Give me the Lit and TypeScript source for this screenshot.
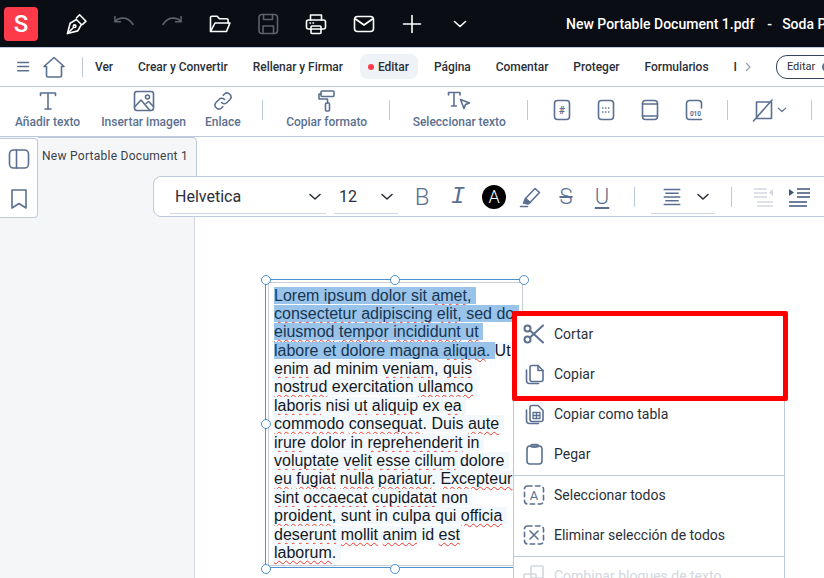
import { LitElement, html, css, svg } from 'lit';
import { customElement } from 'lit/decorators.js';

const icon = (body: unknown, size = 24) => html`<svg class="ico" width=${size} height=${size} viewBox="0 0 24 24" fill="none" stroke="currentColor" stroke-width="1.6" stroke-linecap="round" stroke-linejoin="round">${body}</svg>`;

const chevron = (size = 16) => html`<svg class="ico" width=${size} height=${size} viewBox="0 0 16 16" fill="none" stroke="currentColor" stroke-width="1.6" stroke-linecap="round" stroke-linejoin="round"><path d="M3 5.500l5 4.500 5-4.500"/></svg>`;

const TOP_ICONS = [
  { off: false, d: svg`<path d="M3.500 21.500l2.600-10.200 6.300-3.800 5 5-3.600 6.400z"/><path d="M3.500 21.500l6-6"/><circle cx="10.600" cy="14.200" r="1.300"/><path d="M12.400 6l3.200-3.200 6.400 6.400-3.400 3.200"/>` },
  { off: true, d: svg`<path d="M3 9.500c4-4.500 13-5.500 18 3"/><path d="M3 4.500v5.200h5.400"/>` },
  { off: true, d: svg`<path d="M21 9.500c-4-4.500-13-5.500-18 3"/><path d="M21 4.500v5.200h-5.400"/>` },
  { off: false, d: svg`<path d="M2.500 19V5.500a1.300 1.300 0 0 1 1.300-1.300h5.400l2.200 2.600h7.400a1.300 1.300 0 0 1 1.300 1.300V11"/><path d="M2.500 19.500h16l3.400-8.500H7z"/>` },
  { off: true, d: svg`<rect x="3" y="2.500" width="18.500" height="19" rx="3"/><path d="M7.500 2.500v5h9v-5"/><path d="M7 21.500v-7.500h10.500v7.500"/>` },
  { off: false, d: svg`<path d="M6.500 8V3h11v5"/><rect x="2.500" y="8" width="19" height="9" rx="2"/><rect x="7" y="14" width="10" height="7.500" rx="1"/><path d="M6 11h.5M9 11h.5"/>` },
  { off: false, d: svg`<rect x="2.500" y="4.500" width="19" height="15" rx="3"/><path d="M3.500 7l8.500 6 8.500-6"/>` },
];

const TOOLS_A = [
  { label: 'Añadir texto', d: svg`<path d="M4.500 6.500V4h15v2.500"/><path d="M12 4v16"/><path d="M9 20h6"/>` },
  { label: 'Insertar imagen', d: svg`<rect x="2.500" y="2.500" width="19" height="19" rx="2.500"/><circle cx="15.500" cy="8" r="2"/><path d="M2.500 18l6.500-7 9 10.500"/><path d="M14 14.500l2.500-2 5 5"/>` },
  { label: 'Enlace', d: svg`<path d="M10.500 13.500a3.800 3.800 0 0 0 5.500 0l3-3a3.900 3.900 0 0 0-5.500-5.500l-1.300 1.300"/><path d="M13.500 10.500a3.800 3.800 0 0 0-5.500 0l-3 3a3.900 3.900 0 0 0 5.500 5.500l1.300-1.300"/>` },
];

const FIELD_ICONS = [
  svg`<rect x="4.500" y="2.500" width="15" height="19" rx="3"/><text x="12" y="16" text-anchor="middle" font-family="Roboto" font-size="10" font-weight="700" fill="currentColor" stroke="none">#</text>`,
  svg`<rect x="4.500" y="2.500" width="15" height="19" rx="3"/><path stroke-width="1.300" stroke-dasharray="0.500 2.500" d="M8.500 10h7.500M8.500 14h7.500"/>`,
  svg`<rect x="4.500" y="2.500" width="15" height="19" rx="3"/><path d="M4.500 6h15M4.500 18h15"/>`,
  svg`<path d="M19.500 10V5.500a3 3 0 0 0-3-3h-9a3 3 0 0 0-3 3v13a3 3 0 0 0 3 3h12"/><text x="13.500" y="18" text-anchor="middle" font-family="Roboto" font-size="6.500" font-weight="700" fill="currentColor" stroke="none">010</text>`,
];

const MENU_TOP = [
  { label: 'Cortar', d: svg`<g stroke-width="2"><circle cx="5.500" cy="6.500" r="3"/><circle cx="5.500" cy="17.500" r="3"/><path d="M8 8.500L21 20.500M8 15.500L21 3.500"/></g>` },
  { label: 'Copiar', d: svg`<path d="M8 5.500a2 2 0 0 1 2-2h6l5 5v9a2 2 0 0 1-2 2h-9a2 2 0 0 1-2-2z"/><path d="M16 3.500v5h5"/><path d="M4.500 8v10.500a3 3 0 0 0 3 3h9"/>` },
  { label: 'Copiar como tabla', d: svg`<path d="M8 5.500a2 2 0 0 1 2-2h6l5 5v9a2 2 0 0 1-2 2h-9a2 2 0 0 1-2-2z"/><path d="M4.500 8v10.500a3 3 0 0 0 3 3h9"/><path stroke-width="1.300" d="M11 10.500h7v6h-7zM14.500 10.500v6M11 13.500h7"/>` },
  { label: 'Pegar', d: svg`<rect x="5" y="4" width="15" height="18" rx="3"/><path d="M8.500 4a2 2 0 0 1 2-1.500h4a2 2 0 0 1 2 1.500c0 1.500-8 1.500-8 0z"/>` },
];

const dashed = svg`<rect x="2.500" y="3" width="19" height="18" rx="3" stroke-dasharray="4.500 3.500"/>`;

const LINES = [
  'Lorem ipsum dolor sit *amet, ',
  '*consectetur *adipiscing *elit, sed do ',
  '*eiusmod *tempor *incididunt *ut ',
  'labore et dolore magna *aliqua. |Ut ',
  '*enim ad minim *veniam, *quis ',
  '*nostrud exercitation *ullamco ',
  '*laboris nisi *ut *aliquip ex *ea ',
  '*commodo *consequat. Duis *aute ',
  '*irure dolor in *reprehenderit in ',
  '*voluptate *velit *esse *cillum dolore ',
  '*eu *fugiat *nulla *pariatur. *Excepteur ',
  '*sint *occaecat *cupidatat non ',
  '*proident, sunt in culpa qui *officia ',
  '*deserunt *mollit *anim id *est ',
  '*laborum. ',
];

@customElement('app-root')
export class AppRoot extends LitElement {
  static styles = css`
    :host {
      display: block;
      width: 824px;
      height: 578px;
      overflow: hidden;
      position: relative;
      font-family: Roboto, sans-serif;
      color: #2b2f38;
      background: #fff;
    }
    .ico { display: block; flex: none; }
    .app { display: flex; flex-direction: column; height: 578px; }

    .titlebar {
      display: flex;
      align-items: center;
      height: 47px;
      flex: none;
      background: #0a0d13;
      color: #fff;
      white-space: pre;
    }
    .logo {
      width: 34px;
      height: 34px;
      margin: 0 26px 0 4px;
      border-radius: 4px;
      background: #fd3a4a;
      color: #fff;
      font-size: 24px;
      font-weight: 500;
      line-height: 34px;
      text-align: center;
      flex: none;
    }
    .top-icons { display: flex; align-items: center; gap: 24px; }
    .top-icons .off { color: #5d6168; }
    .title { margin-left: 94px; font-size: 14px; font-weight: 500; }
    .dash { margin: 0 10px 0 13px; }

    .menubar {
      display: flex;
      align-items: center;
      height: 37px;
      padding-bottom: 1px;
      flex: none;
      border-top: 1px solid #bccadc;
      border-bottom: 1px solid #bccadc;
      font-size: 12px;
      font-weight: 500;
      white-space: nowrap;
      overflow: hidden;
    }
    .burger { margin-left: 14px; color: #5b7090; }
    .home { margin-left: 8px; color: #5b7090; }
    .menubar .sep { margin: 0 12px 0 16px; }
    .sep { width: 1px; height: 20px; background: #bccadc; flex: none; }
    .tabs { display: flex; align-items: center; gap: 25px; letter-spacing: -0.04px; }
    .tabs .active {
      display: flex;
      align-items: center;
      gap: 4px;
      height: 25px;
      padding: 0 9px 0 8px;
      margin: 0 -9px 0 -8px;
      border-radius: 8px;
      background: #eff2f6;
    }
    .dot { width: 6px; height: 6px; border-radius: 50%; background: #fd3a4a; }
    .more { color: #9aa3af; margin-left: -20px; }
    .mode {
      margin-left: 22px;
      display: flex;
      align-items: center;
      gap: 7px;
      height: 22px;
      padding: 0 10px;
      border: 1px solid #33435c;
      border-radius: 11px;
      font-size: 11px;
      font-weight: 400;
    }
    .knob { width: 10px; height: 10px; border-radius: 50%; background: #5b7090; }

    .toolbar {
      display: flex;
      align-items: center;
      gap: 20px;
      height: 50px;
      box-sizing: border-box;
      flex: none;
      padding: 0 0 4px 15px;
      border-bottom: 1px solid #bccadc;
      color: #5b7090;
      overflow: hidden;
      white-space: nowrap;
    }
    .tool {
      display: flex;
      flex-direction: column;
      align-items: center;
      gap: 1px;
      font-size: 12px;
      font-weight: 500;
      line-height: 16px;
    }
    .tool.wide { min-width: 82px; }
    .tool.image { margin-left: 1px; margin-right: -1px; }
    .toolbar .sep { margin: 0 3px 0 1px; }
    .field-group { display: flex; gap: 20px; margin-left: -1px; }
    .shape { display: flex; align-items: center; gap: 1px; margin-right: 2px; }

    .workspace { flex: 1; display: flex; position: relative; }
    .rail {
      width: 194px;
      flex: none;
      display: flex;
      align-items: flex-start;
      position: relative;
      z-index: 0;
      background: #f5f6f8;
      border-right: 1px solid #d5d8de;
    }
    .side {
      width: 38px;
      height: 80px;
      flex: none;
      display: flex;
      flex-direction: column;
      align-items: center;
      gap: 16px;
      padding-top: 8px;
      box-sizing: border-box;
      background: #fff;
      border: 1px solid #bccadc;
      border-left: 0;
      border-radius: 0 4px 4px 0;
      color: #5b7090;
      margin-top: 1px;
    }
    .tab {
      flex: none;
      width: 159px;
      height: 40px;
      box-sizing: border-box;
      padding: 11px 0 0 4px;
      background: #f5f6f8;
      border-top: 1px solid #bccadc;
      border-right: 1px solid #bccadc;
      border-radius: 0 5px 0 0;
      font-size: 12px;
      letter-spacing: 0.27px;
      white-space: nowrap;
      color: #3a3f48;
    }
    .page { flex: 1; background: #fff; }

    .format {
      position: absolute;
      left: 153px;
      top: 39px;
      right: -10px;
      height: 41px;
      box-sizing: border-box;
      display: flex;
      align-items: center;
      padding-left: 16px;
      background: #fff;
      border: 1px solid #bccadc;
      border-radius: 8px;
      color: #5b7090;
      white-space: nowrap;
    }
    .select {
      display: flex;
      align-items: center;
      justify-content: space-between;
      height: 36px;
      box-sizing: border-box;
      padding-top: 2px;
      border-bottom: 1px solid #cfd8e4;
      color: #2b2f38;
      font-size: 16px;
      margin-top: -1px;
    }
    .font { width: 156px; padding-left: 5px; padding-right: 3px; }
    .size { width: 64px; margin-left: 8px; padding-left: 5px; padding-right: 3px; }
    .glyphs { display: flex; align-items: center; margin-left: 6px; }
    .glyph {
      width: 36px;
      flex: none;
      text-align: center;
      font-size: 22px;
      font-weight: 300;
      line-height: 24px;
    }
    .glyph.b { font-size: 24px; }
    .glyph.i { font-family: 'Liberation Mono', monospace; font-style: italic; font-size: 24px; }
    .glyph.s { text-decoration: line-through; text-decoration-thickness: 1.500px; }
    .glyph.u { text-decoration: underline; text-decoration-thickness: 1.500px; text-underline-offset: 3px; }
    .colour {
      width: 24px;
      height: 24px;
      margin: 0 6px;
      flex: none;
      border-radius: 50%;
      background: #000;
      color: #fff;
      text-align: center;
      font-size: 18px;
      font-weight: 300;
      line-height: 24px;
    }
    .pen { margin: 0 6px; }
    .format .sep { height: 20px; }
    .glyphs + .sep { margin-left: 14px; }
    .align { width: 64px; margin-left: 16px; padding-left: 11px; padding-right: 4px; color: #2b2f38; }
    .align .lines { color: #5b7090; }
    .align + .sep { margin-left: 16px; }
    .indent-off { color: #d3d8e0; margin-left: 20px; }
    .indent-on { color: #3f5678; margin-left: 11px; }

    .box {
      position: absolute;
      left: 265px;
      top: 142px;
      width: 258px;
      height: 289px;
      box-sizing: border-box;
      border: 1px solid #4d90cf;
    }
    .inner {
      position: absolute;
      inset: 2px -1px 1px 2px;
      border: 1px solid #c9ced6;
    }
    .text {
      position: absolute;
      left: 8px;
      top: 6.500px;
      font-family: 'Liberation Sans', Arial, sans-serif;
      font-size: 16px;
      line-height: 18.400px;
      white-space: pre;
      color: #15181d;
    }
    .line { display: block; height: 18.400px; }
    .plain { background: #f3f8fd; }
    .chosen { background: #99c3e8; color: #173553; }
    .typo {
      text-decoration: underline wavy #f2392c;
      text-decoration-thickness: 1.400px;
      text-underline-offset: 2px;
      text-decoration-skip-ink: none;
    }
    .handle {
      position: absolute;
      width: 10px;
      height: 10px;
      box-sizing: border-box;
      margin: -5.500px 0 0 -5.500px;
      border: 1px solid #4d90cf;
      border-radius: 50%;
      background: #fff;
    }

    .menu {
      position: absolute;
      left: 513px;
      top: 176px;
      width: 272px;
      box-sizing: border-box;
      background: #fff;
      border: 1px solid #bccadc;
      font-size: 14px;
      white-space: nowrap;
    }
    .item {
      display: flex;
      align-items: center;
      gap: 8px;
      height: 40px;
      padding-left: 8px;
      color: #2b2f38;
    }
    .item .ico { color: #5b7090; }
    .rule { height: 1px; margin: 1px 0 -1px; background: #bccadc; }
    .item.disabled, .item.disabled .ico { color: #d3d7dd; }
    .mark {
      position: absolute;
      left: -2px;
      top: -3px;
      width: 276px;
      height: 90px;
      box-sizing: border-box;
      border: 5px solid #ff0000;
      border-radius: 2px;
    }
  `;

  renderLine(line: string, index: number) {
    const parts = line.split('|');
    const selected = index < 3 || parts.length > 1;
    return html`<span class="line">${parts.map((part, i) => html`<span class=${selected && i === 0 ? 'chosen' : 'plain'}>${part.split(/(?=\*)/).map(chunk => this.renderChunk(chunk))}</span>`)}</span>`;
  }

  renderChunk(chunk: string) {
    if (!chunk.startsWith('*')) return chunk;
    const match = chunk.slice(1).match(/^(\S+?)([.,]?)(\s.*)$/s);
    if (!match) return chunk.slice(1);
    return html`<span class="typo">${match[1]}</span>${match[2]}${match[3]}`;
  }

  render() {
    const handles = [[0, 0], [129, 0], [258, 0], [0, 144], [0, 289], [129, 289]];
    return html`
      <div class="app">
        <div class="titlebar">
          <div class="logo">S</div>
          <div class="top-icons">
            ${TOP_ICONS.map(t => html`<span class=${t.off ? 'off' : ''}>${icon(t.d)}</span>`)}
            ${icon(svg`<path d="M3.500 12h17M12 3.500v17"/>`)}
            ${icon(svg`<path d="M6.500 9.500l5.500 5 5.500-5"/>`)}
          </div>
          <div class="title">New Portable Document 1.pdf<span class="dash">-</span>Soda PDF</div>
        </div>

        <div class="menubar">
          <span class="burger">${icon(svg`<path d="M3 6.500h13M3 11.500h13M3 16.500h13" transform="translate(1.500 0)" stroke-width="1.800"/>`, 20)}</span>
          <span class="home">${icon(svg`<path d="M12 2.500l10 9h-2.500v9a1.500 1.500 0 0 1-1.500 1.500H6a1.500 1.500 0 0 1-1.500-1.500v-9H2z"/>`)}</span>
          <span class="sep"></span>
          <div class="tabs">
            <span>Ver</span>
            <span>Crear y Convertir</span>
            <span>Rellenar y Firmar</span>
            <span class="active"><span class="dot"></span>Editar</span>
            <span>Página</span>
            <span>Comentar</span>
            <span>Proteger</span>
            <span>Formularios</span>
            <span>I</span>
            <span class="more">${icon(svg`<path d="M9 5l7 7-7 7" stroke-width="2.500"/>`, 12)}</span>
          </div>
          <div class="mode">Editar<span class="knob"></span></div>
        </div>

        <div class="toolbar">
          ${TOOLS_A.map((t, i) => html`<div class="tool ${i === 1 ? 'image' : ''}">${icon(t.d)}<span>${t.label}</span></div>`)}
          <span class="sep"></span>
          <div class="tool wide">
            ${icon(svg`<rect x="6" y="2" width="13" height="5.500" rx="1"/><path d="M6 5H4v5h8.500v4"/><rect x="10.500" y="14" width="4" height="8" rx="1"/>`)}
            <span>Copiar formato</span>
          </div>
          <span class="sep"></span>
          <div class="tool">
            ${icon(svg`<path d="M1.500 6V3.500H13V6M7 3.500V17M4.500 17h5"/><path d="M13.500 10.500l9 3.500-4 1.500-1.500 4z"/>`)}
            <span>Seleccionar texto</span>
          </div>
          <span class="sep"></span>
          <div class="field-group">${FIELD_ICONS.map(d => icon(d))}</div>
          <span class="sep"></span>
          <div class="shape">
            ${icon(svg`<path d="M5.500 4H20.500V20.500H5.500zM2.500 23L21 2"/>`)}
            ${chevron(12)}
          </div>
          <span class="sep"></span>
        </div>

        <div class="workspace">
          <div class="rail">
            <div class="side">
              ${icon(svg`<rect x="2.500" y="3" width="19" height="18" rx="4"/><path d="M9.500 3v18"/>`)}
              ${icon(svg`<path d="M5 3h14v18l-7-4.500L5 21z"/>`)}
            </div>
            <div class="tab">New Portable Document 1</div>
          </div>
          <div class="page"></div>

          <div class="format">
            <div class="select font"><span>Helvetica</span>${chevron()}</div>
            <div class="select size"><span>12</span>${chevron()}</div>
            <div class="glyphs">
              <span class="glyph b">B</span>
              <span class="glyph i">I</span>
              <span class="colour">A</span>
              <span class="pen">${icon(svg`<path d="M7.500 13.500L17 3.500l4.500 4-9.500 10z"/><path fill="currentColor" d="M7.500 13.500l4.500 4-2 1.500-4.500-1z"/><path d="M2.500 21.500h7"/>`)}</span>
              <span class="glyph s">S</span>
              <span class="glyph u">U</span>
            </div>
            <span class="sep"></span>
            <div class="select align">
              <span class="lines">${icon(svg`<path stroke-width="1.800" stroke-linecap="butt" d="M2 3h20M4 7.500h16M2 12h20M4 16.500h16M2 21h20"/>`, 20)}</span>
              ${chevron()}
            </div>
            <span class="sep"></span>
            <span class="indent-off">${icon(svg`<path stroke-width="1.500" stroke-linecap="butt" d="M2 4h13M2 8h13M2 12h13M5 17h16M5 21h16"/><path fill="currentColor" stroke="none" d="M21 4v7l-4-3.500z"/>`)}</span>
            <span class="indent-on">${icon(svg`<path stroke-width="1.500" stroke-linecap="butt" d="M10 4h13M10 8h13M10 12h13M2 17h18M2 21h18"/><path fill="currentColor" stroke="none" d="M2 4v7l5-3.500z"/>`)}</span>
          </div>

          <div class="box">
            <div class="inner"></div>
            <div class="text">${LINES.map((l, i) => this.renderLine(l, i))}</div>
            ${handles.map(([x, y]) => html`<span class="handle" style="left:${x}px;top:${y}px"></span>`)}
          </div>

          <div class="menu">
            ${MENU_TOP.map(m => html`<div class="item">${icon(m.d)}<span>${m.label}</span></div>`)}
            <div class="rule"></div>
            <div class="item">
              ${icon(svg`${dashed}<text x="12" y="17" text-anchor="middle" font-family="Roboto" font-size="13" fill="currentColor" stroke="none">A</text>`)}
              <span>Seleccionar todos</span>
            </div>
            <div class="item">
              ${icon(svg`${dashed}<path d="M8 8l8 8M16 8l-8 8"/>`)}
              <span>Eliminar selección de todos</span>
            </div>
            <div class="rule"></div>
            <div class="item disabled">
              ${icon(svg`<rect x="9" y="2" width="12" height="12" rx="1"/><rect x="2" y="10" width="12" height="12" rx="1"/>`)}
              <span>Combinar bloques de texto</span>
            </div>
            <div class="mark"></div>
          </div>
        </div>
      </div>
    `;
  }
}
